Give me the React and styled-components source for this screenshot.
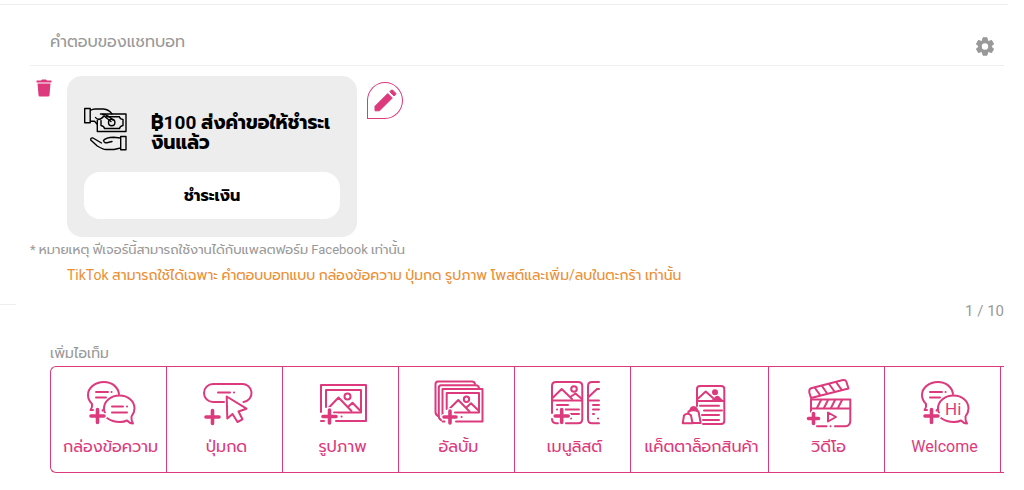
import React from 'react'
import styled, { createGlobalStyle } from 'styled-components'

const pink = '#dc3a7c'
const grey = '#999999'

const GlobalStyle = createGlobalStyle`
  * {
    box-sizing: border-box;
  }
  body {
    margin: 0;
    background: #ffffff;
    font-family: Roboto, Prompt, Kanit, "Noto Sans Thai", "Noto Sans", sans-serif;
    font-size: 16px;
    line-height: 20px;
    overflow: hidden;
  }
  button {
    font-family: inherit;
    cursor: pointer;
  }
`

const Page = styled.main`
  padding-top: 4px;
`

const Panel = styled.section`
  margin-right: 16px;
  padding: 24px 4px 0 30px;
  border-top: 1px solid #eeeeee;
`

const Header = styled.header`
  display: flex;
  justify-content: space-between;
  align-items: center;
  height: 37px;
  padding: 0 10px 2px 20px;
  border-bottom: 1px solid #eeeeee;
`

const Title = styled.h1`
  margin: 0;
  padding-bottom: 8px;
  color: ${grey};
  font-size: 16px;
  font-weight: 400;
`

const IconButton = styled.button`
  display: flex;
  padding: 0;
  border: 0;
  background: none;
  color: ${props => props.$color};
`

const Answer = styled.div`
  display: flex;
  align-items: flex-start;
  padding: 10px 0 0 6px;
`

const TrashSlot = styled.div`
  width: 31px;
  padding-top: 3px;
`

const PayCard = styled.article`
  width: 290px;
  padding: 31px 17px 18px;
  border-radius: 15px;
  background: #ededed;
`

const PayInfo = styled.div`
  display: flex;
  gap: 24px;
  height: 65px;
`

const PayText = styled.p`
  margin: 6px 0 0;
  color: #000000;
  font-size: 19px;
  font-weight: 700;
  line-height: 20px;
  white-space: nowrap;
`

const PayButton = styled.button`
  width: 100%;
  height: 47px;
  border: 0;
  border-radius: 16px;
  background: #ffffff;
  color: #000000;
  font-size: 16px;
  font-weight: 700;
`

const EditButton = styled.button`
  display: flex;
  justify-content: center;
  align-items: center;
  width: 36px;
  height: 37px;
  margin: 6px 0 0 10px;
  padding: 0;
  border: 1px solid ${pink};
  border-radius: 50% 50% 50% 0;
  background: #ffffff;
  color: ${pink};
`

const Note = styled.p`
  margin: 3px 0 0;
  color: ${grey};
  font-size: 13px;
`

const Warning = styled.p`
  margin: 5px 0 0 37px;
  color: #eb8f34;
  font-size: 14px;
`

const Divider = styled.hr`
  width: 16px;
  height: 1px;
  margin: 19px 0 0;
  border: 0;
  background: #eeeeee;
`

const Counter = styled.p`
  margin: 0;
  padding-right: 20px;
  color: ${grey};
  font-size: 15px;
  text-align: right;
  line-height: 12px;
`

const AddItems = styled.section`
  padding: 26px 20px 0 50px;
`

const Label = styled.h2`
  margin: 0 0 3px;
  color: ${grey};
  font-size: 14px;
  font-weight: 400;
`

const Toolbar = styled.div`
  display: flex;
  height: 107px;
  overflow: hidden;
  border: 1px solid ${pink};
  border-right: 0;
  border-radius: 6px 0 0 6px;
`

const Item = styled.button`
  display: flex;
  flex: none;
  flex-direction: column;
  align-items: center;
  gap: 7px;
  width: ${props => (props.$wide ? '138px' : '116px')};
  padding: 13px 8px 0 12px;
  border: 0;
  border-right: 1px solid ${pink};
  background: none;
  color: ${pink};
  font-size: 16px;
  line-height: 24px;
  white-space: nowrap;
`

const Drawing = styled.svg`
  flex: none;
  overflow: visible;
  fill: none;
  stroke: currentColor;
  stroke-width: ${props => props.$line || 2}px;
  stroke-linecap: round;
  stroke-linejoin: round;
  .solid {
    fill: currentColor;
    stroke: none;
  }
  text {
    fill: currentColor;
    stroke: none;
    font-size: 17px;
  }
`

const Icon = ({ children }) => (
  <Drawing width="48" height="48" viewBox="0 0 48 48" aria-hidden="true">
    {children}
  </Drawing>
)

// white halo first, so the plus cuts the lines under it
const Plus = ({ x, y, arm = 6.5 }) => {
  const d = `M${x - arm} ${y}h${arm * 2}M${x} ${y - arm}v${arm * 2}`
  return (
    <>
      <path stroke="#ffffff" strokeWidth="6" d={d} />
      <path strokeWidth="3.6" d={d} />
    </>
  )
}

const Bubbles = ({ children }) => (
  <Icon>
    <path d="M32 14C31 7 25 2 17 2C8 2 1 8 1 15c0 4 1.500 6.500 4 9c.6 2.500 0 4-1.500 6H6M15.500 30.500l1-1" />
    <path d="M20 38C24 41 28 42 33 42c3 0 5-.5 7-1.500c2 2.200 4 3 6 3c-1.400-2.500-2-4-1.500-7c2-2.500 3-5 3-8C47.500 21 41 15.500 32.500 15.500S17 21 17 28.500c0 1.500.3 3 1 4.500" />
    <path d="M9 12h12M24.500 12h.1M9 17.500h10" />
    {children}
    <Plus x={10.5} y={36} />
  </Icon>
)

const TextIcon = () => (
  <Bubbles>
    <path d="M25 26.500h11M40 26.500h.1M25 32.500h15" />
  </Bubbles>
)

const WelcomeIcon = () => (
  <Bubbles>
    <text x="24" y="35">Hi</text>
  </Bubbles>
)

const ButtonIcon = () => (
  <Icon>
    <path d="M21 22H10A9 9 0 0 1 10 4H38.500A9 9 0 0 1 40.500 22" />
    <path d="M15 12.500h12M31 12.500h.1" />
    <path d="M23.700 16.500L24.300 38.500L29.500 34L34.500 42L39.500 39.300L35.500 31.500L43.500 28.700Z" />
    <Plus x={9.5} y={37} />
  </Icon>
)

const ImageIcon = () => (
  <Icon>
    <path d="M2 32V5H47V41H17M2 41h3" />
    <path d="M7 27V10H42V32.500H15" />
    <circle cx="28.500" cy="16.500" r="3" />
    <path d="M10 27.500L19.500 17.500L32.500 31M29.500 26.500L33.500 22.700L41 30.500M22.500 36.500h.1" />
    <Plus x={10.5} y={36.5} />
  </Icon>
)

const AlbumIcon = () => (
  <Icon>
    <path d="M3 36C1 35 .5 34 .5 32V4Q.5 1.500 3 1.500H37Q39.500 1.500 40 4" />
    <path d="M6 40C4 39 3.800 38 3.800 36V8Q3.800 5.300 6 5.300H41Q43.500 5.300 44 8" />
    <path d="M7.500 35V9H47.500V41.500H21M7.500 41.500h2" />
    <path d="M11.700 29V13H44V32.500H20" />
    <circle cx="31.500" cy="19.200" r="2.700" />
    <path d="M14.300 29L23.300 20L34.500 31.500M32 27L36 23.300L43.500 30.500M26.500 37h.1" />
    <Plus x={15} y={37} arm={6} />
  </Icon>
)

const MenuIcon = () => (
  <Icon>
    <path d="M1 33V6Q1 2 5 2H27Q31.300 2 31.300 6V39Q31.300 43.300 27 43.300H15M1 39Q1 43 5 43.300H7M1 20.500H31" />
    <circle cx="23" cy="9" r="2.800" />
    <path d="M1.500 18L10.700 9L21 19M20 16.500L24.500 13.500L31 19" />
    <path d="M6 25H17M14.500 29.500H28M6 29.500h.1M19 34H28M20 38.500h.1" />
    <path d="M48 2H41Q37 2 37 6V39Q37 43.300 41 43.300H48M37 20.500H48M37 17.500L46 9H48M42 25h6M42 29.500h6M42 34h1M47 38.500h.1" />
    <Plus x={10.7} y={36} />
  </Icon>
)

const CatalogIcon = () => (
  <Icon>
    <path d="M19 26V9Q19 6 22 6H43Q46.300 6 46.300 9V41Q46.300 44 43 44H25M19 21H46M19.500 19L27.700 11.500L35 18" />
    <circle className="solid" cx="37" cy="12.300" r="3" />
    <path className="solid" d="M32 21.500L36 18Q39.500 13.500 42.500 18L46.500 21.500Z" />
    <path d="M22 25.700H41M26 30.500H44M24 35H41M25 40H41" />
    <path className="solid" d="M11 32Q11.500 26 15.500 26Q20 26 20.500 32Z" />
    <path fill="#ffffff" d="M9 43L10.500 31.500Q15.500 29 20.500 31.500L22.700 43Z" />
    <path fill="#ffffff" d="M4.700 43.300L6 35.500Q9.500 32 13 35.500L14.500 43.300Z" />
  </Icon>
)

const VideoIcon = () => (
  <Icon>
    <path d="M6 18L4.300 12.500Q4 9 6 8.300L38 0Q40.500-.5 41.300 1.500L43.500 8.500L6 18Z" />
    <path d="M10 8L15 15M17 6L22 13.300M24 4L29.500 11.500M31 2L36.500 9.700" />
    <path d="M6 32V19.500H45.300V41Q45 46 40.500 46.200H30M6 28.500H45M12 46.200H21.500M25.500 46.200h.1" />
    <path d="M16 20L12 28M23 20L19 28M30 20L26 28M37 20L33 28" />
    <path d="M23 32.500V41.500L31 37Z" />
    <Plus x={8.5} y={38.5} arm={5} />
  </Icon>
)

const MoneyIcon = () => (
  <Drawing $line={1.4} width="43" height="44" viewBox="0 0 43 44" aria-hidden="true">
    <path d="M.7 1.500H6.200V15.700H.7ZM6.200 3.500Q9 1.700 12 2H19.500Q25 2.500 28 7M6.200 14.300H10.500L13 17" />
    <path d="M16.500 7H42V24.500H13.300V13.500" />
    <path d="M14 12.500Q17 12.500 20 9L27 14.500M18.500 7.500Q23 7 29 13M11.500 10.500Q13 13 16.500 12" />
    <path d="M22 9.800H35.500Q36 12 39 12.500V18.500Q36 19 35.500 21.500H20.500Q20 19 17 18.500V13.500" />
    <circle cx="27.700" cy="15.500" r="3.200" />
    <path d="M36.700 29.500H42V42.800H36.700ZM36.500 31L29.500 30.300Q22 30.500 19.500 33.500Q20 36.500 24 35.500L28 34.500M17.500 36L9 31Q6.500 30.500 6.700 33L13.300 39Q19 42.500 22 42.500H30L36.500 41" />
  </Drawing>
)

const TrashIcon = () => (
  <svg width="16" height="18" viewBox="0 0 16 18" fill="currentColor" aria-hidden="true">
    <path d="M.5 1.500H5L6 .5H10L11 1.500H15.500V3.500H.5ZM1.500 4.500H14.500L13.500 16Q13.400 17.500 12 17.500H4Q2.600 17.500 2.500 16Z" />
  </svg>
)

const GearIcon = () => (
  <svg width="18" height="19" viewBox="-9 -9.5 18 19" fill="none" stroke="currentColor" aria-hidden="true">
    <circle r="5" strokeWidth="3.6" />
    {[0, 60, 120, 180, 240, 300].map(angle => (
      <path key={angle} transform={`rotate(${angle})`} fill="currentColor" strokeWidth="1" strokeLinejoin="round" d="M-2.600-5.500L-2-8.700H2L2.600-5.500Z" />
    ))}
  </svg>
)

const PencilIcon = () => (
  <svg width="23" height="23" viewBox="0 0 23 23" fill="currentColor" stroke="currentColor" strokeLinejoin="round" aria-hidden="true">
    <path d="M1 17.300L13.800 4.500L18.300 9L5.500 21.800H1Z" />
    <path d="M15.800 2.700L17.400 1.100Q18 .7 18.600 1.100L21.700 4.200Q22.200 4.800 21.700 5.400L20.100 7Z" />
  </svg>
)

const items = [
  { label: 'กล่องข้อความ', Picture: TextIcon },
  { label: 'ปุ่มกด', Picture: ButtonIcon },
  { label: 'รูปภาพ', Picture: ImageIcon },
  { label: 'อัลบั้ม', Picture: AlbumIcon },
  { label: 'เมนูลิสต์', Picture: MenuIcon },
  { label: 'แค็ตตาล็อกสินค้า', Picture: CatalogIcon, wide: true },
  { label: 'วิดีโอ', Picture: VideoIcon },
  { label: 'Welcome', Picture: WelcomeIcon }
]

const App = () => (
  <Page lang="th">
    <GlobalStyle />
    <Panel>
      <Header>
        <Title>คำตอบของแชทบอท</Title>
        <IconButton $color={grey} aria-label="ตั้งค่า">
          <GearIcon />
        </IconButton>
      </Header>
      <Answer>
        <TrashSlot>
          <IconButton $color={pink} aria-label="ลบ">
            <TrashIcon />
          </IconButton>
        </TrashSlot>
        <PayCard>
          <PayInfo>
            <MoneyIcon />
            <PayText>
              ฿100 ส่งคำขอให้ชำระเ<br />งินแล้ว
            </PayText>
          </PayInfo>
          <PayButton>ชำระเงิน</PayButton>
        </PayCard>
        <EditButton aria-label="แก้ไข">
          <PencilIcon />
        </EditButton>
      </Answer>
      <Note>* หมายเหตุ ฟีเจอร์นี้สามารถใช้งานได้กับแพลตฟอร์ม Facebook เท่านั้น</Note>
      <Warning>
        TikTok สามารถใช้ได้เฉพาะ คำตอบบอทแบบ กล่องข้อความ ปุ่มกด รูปภาพ โพสต์และเพิ่ม/ลบในตะกร้า เท่านั้น
      </Warning>
    </Panel>
    <Divider />
    <Counter>1 / 10</Counter>
    <AddItems>
      <Label>เพิ่มไอเท็ม</Label>
      <Toolbar>
        {items.map(({ label, Picture, wide }) => (
          <Item key={label} $wide={wide}>
            <Picture />
            {label}
          </Item>
        ))}
      </Toolbar>
    </AddItems>
  </Page>
)

export default App
